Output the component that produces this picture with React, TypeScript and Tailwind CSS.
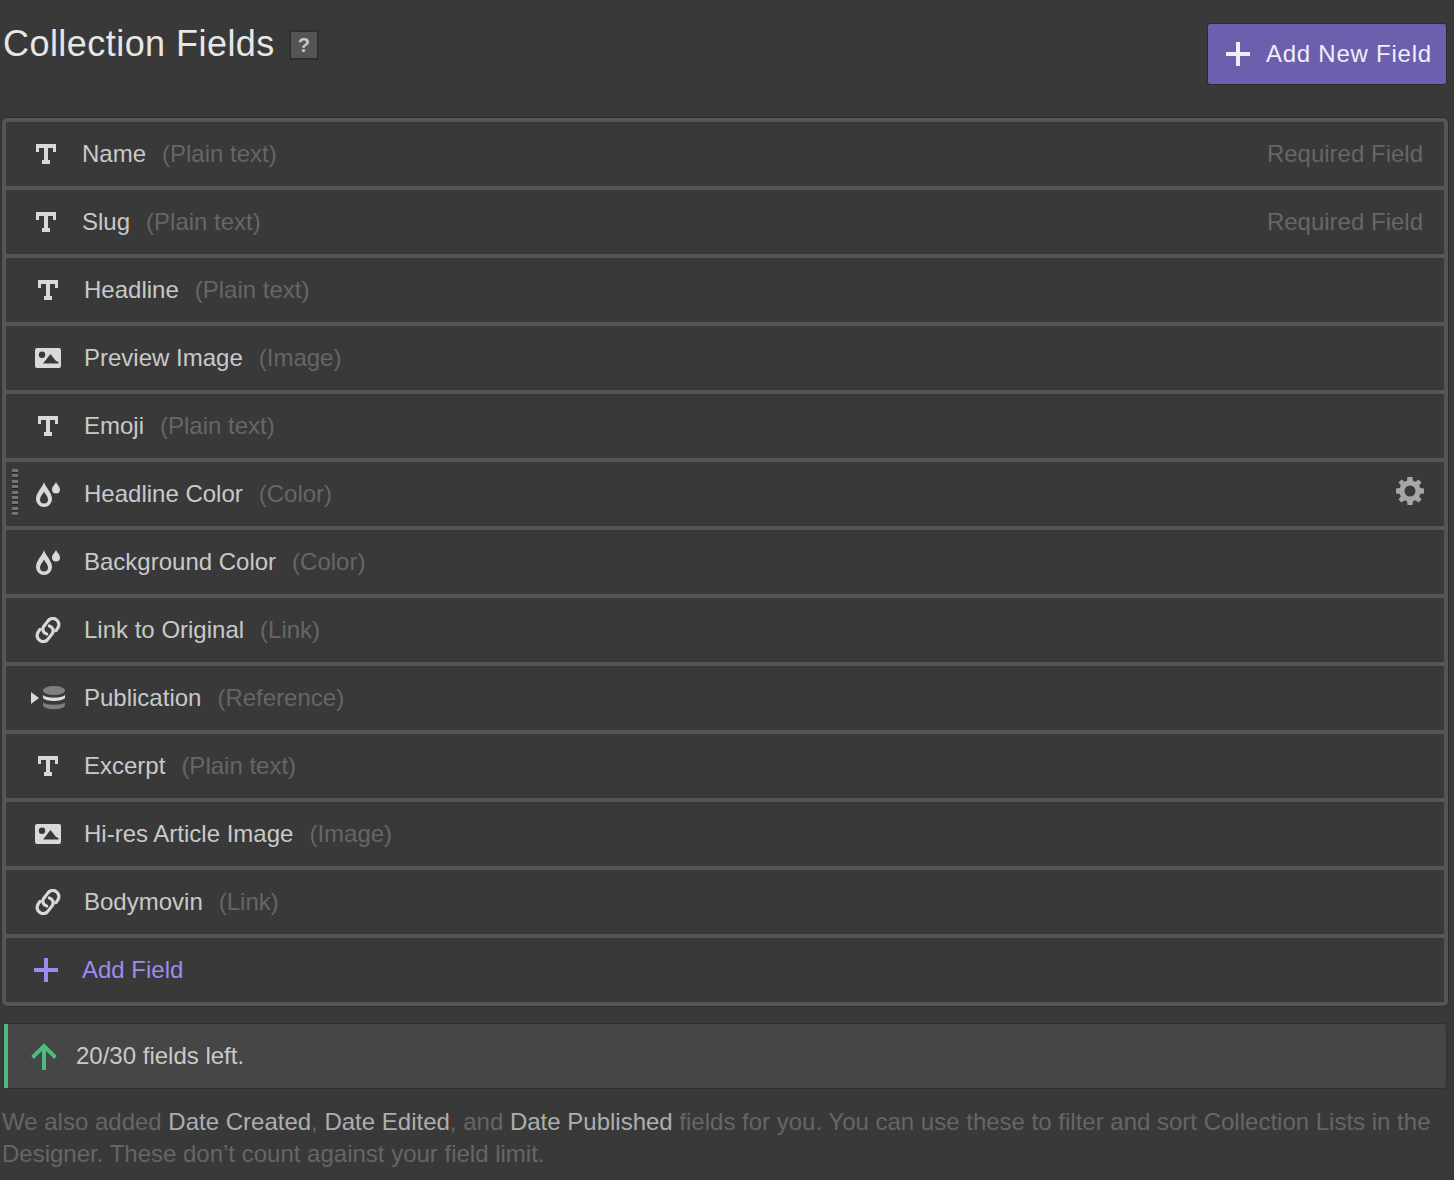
import React from "react";

const TIcon = () => (
  <svg width="20" height="20" viewBox="0 0 20 20" fill="#d9d9d9">
    <path d="M0 0H20V8H17V4H12V16H14V20H6V16H8V4H3V8H0Z" />
  </svg>
);
const ImageIcon = () => (
  <svg width="26" height="20" viewBox="0 0 26 20">
    <path fillRule="evenodd" fill="#d9d9d9" d="M2 0H24A2 2 0 0 1 26 2V18A2 2 0 0 1 24 20H2A2 2 0 0 1 0 18V2A2 2 0 0 1 2 0ZM7 3.6A3.2 3.2 0 1 0 7 10A3.2 3.2 0 1 0 7 3.6ZM15.5 6L8 15.5H23.5V14L21 13L19 10.5Z" />
  </svg>
);
const DropIcon = () => (
  <svg width="24" height="25" viewBox="0 0 24 25">
    <path
      fillRule="evenodd"
      fill="#d9d9d9"
      d="M8 0C7 4.5 0 10.5 0 17A8 8 0 0 0 16 17C16 10.5 9 4.5 8 0ZM8 9.5C9 12 12 14.5 12 17.5A4 4 0 0 1 4 17.5C4 14.5 7 12 8 9.5Z"
    />
    <path d="M20 0C18.8 3 16 4.6 16 7.4A4 4 0 0 0 24 7.4C24 4.6 21.2 3 20 0Z" fill="#d9d9d9" />
  </svg>
);
const LinkIcon = () => (
  <svg width="26" height="26" viewBox="0 0 26 26" fill="none" stroke="#d9d9d9" strokeWidth="3.2" strokeLinecap="round">
    <path d="M11.6 17A5 5 0 0 1 8.6 9.6L12.6 4.4A6 6 0 0 1 23 10.6L21 13.6" />
    <path d="M14.4 9A5 5 0 0 1 17.4 16.4L13.4 21.6A6 6 0 0 1 3 15.4L5 12.4" />
  </svg>
);
const RefIcon = () => (
  <span className="flex items-center">
    <svg width="8" height="12" viewBox="0 0 8 12" fill="#d9d9d9" className="mr-[4px]">
      <path d="M0 0L8 6L0 12Z" />
    </svg>
    <svg width="22" height="24" viewBox="0 0 22 24">
      <ellipse cx="11" cy="4.5" rx="11" ry="4.5" fill="#7f7f7f" />
      <path d="M0 9C3 12.5 19 12.5 22 9V12C19 16 3 16 0 12Z" fill="#dcdcdc" />
      <path d="M0 16.5C3 19.5 19 19.5 22 16.5V19.5C20 24.5 2 24.5 0 19.5Z" fill="#7f7f7f" />
    </svg>
  </span>
);
const PlusIcon = ({ color }: { color: string }) => (
  <svg width="24" height="24" viewBox="0 0 24 24" fill={color}>
    <path d="M10 0H14V10H24V14H14V24H10V14H0V10H10Z" />
  </svg>
);
const GearIcon = () => (
  <svg width="28" height="28" viewBox="0 0 28 28" fill="#a6a6a6">
    <path
      fillRule="evenodd"
      d="M11.5 0H16.5L17 3.8L19.4 4.8L22.5 2.5L25.5 5.5L23.2 8.6L24.2 11L28 11.5V16.5L24.2 17L23.2 19.4L25.5 22.5L22.5 25.5L19.4 23.2L17 24.2L16.5 28H11.5L11 24.2L8.6 23.2L5.5 25.5L2.5 22.5L4.8 19.4L3.8 17L0 16.5V11.5L3.8 11L4.8 8.6L2.5 5.5L5.5 2.5L8.6 4.8L11 3.8ZM14 8.5A5.5 5.5 0 1 0 14 19.5A5.5 5.5 0 1 0 14 8.5Z"
    />
  </svg>
);

type Field = { name: string; type: string; icon: React.ReactNode; required?: boolean; hover?: boolean; shift?: boolean };

const fields: Field[] = [
  { name: "Name", type: "(Plain text)", icon: <TIcon />, required: true, shift: true },
  { name: "Slug", type: "(Plain text)", icon: <TIcon />, required: true, shift: true },
  { name: "Headline", type: "(Plain text)", icon: <TIcon /> },
  { name: "Preview Image", type: "(Image)", icon: <ImageIcon /> },
  { name: "Emoji", type: "(Plain text)", icon: <TIcon /> },
  { name: "Headline Color", type: "(Color)", icon: <DropIcon />, hover: true },
  { name: "Background Color", type: "(Color)", icon: <DropIcon /> },
  { name: "Link to Original", type: "(Link)", icon: <LinkIcon /> },
  { name: "Publication", type: "(Reference)", icon: <RefIcon /> },
  { name: "Excerpt", type: "(Plain text)", icon: <TIcon /> },
  { name: "Hi-res Article Image", type: "(Image)", icon: <ImageIcon /> },
  { name: "Bodymovin", type: "(Link)", icon: <LinkIcon /> },
];

function Row({ f }: { f: Field }) {
  return (
    <div className="relative flex h-[68px] items-center border-b-4 border-[#555555] text-[24px] leading-none">
      {f.hover && (
        <div className="absolute left-[6px] top-[7px] flex h-[47px] w-[6px] flex-col justify-between">
          {Array.from({ length: 9 }).map((_, i) => (
            <span key={i} className="block h-[4px] w-[6px] border-b border-[#242424] bg-[#747474]" />
          ))}
        </div>
      )}
      <div className={`flex items-center justify-center ${f.shift ? "ml-[20px] w-[40px]" : "ml-[22px] w-[40px]"}`}>{f.icon}</div>
      <span className="ml-[16px] text-[#c9c9c9]">{f.name}</span>
      <span className="ml-[16px] text-[#666666]">{f.type}</span>
      {f.required && <span className="ml-auto mr-[21px] text-[#666666]">Required Field</span>}
      {f.hover && (
        <div className="ml-auto mr-[20px] mb-[6px]">
          <GearIcon />
        </div>
      )}
    </div>
  );
}

export default function App() {
  return (
    <div className="h-[1180px] overflow-hidden bg-[#393939] font-['Liberation_Sans',Arial,sans-serif]">
      <div className="flex h-[117px] items-start justify-between pl-[3px] pr-[7px]">
        <div className="mt-[23px] flex items-center">
          <h1 className="text-[36px] font-normal leading-[42px] tracking-[0.45px] text-[#e6e6e6]">Collection Fields</h1>
          <span className="ml-[14px] mt-[2px] flex h-[30px] w-[30px] items-center justify-center rounded-[3px] border-2 border-[#2f2f2f] bg-[#555555] text-[20px] font-bold text-[#c8c8c8]">
            ?
          </span>
        </div>
        <button className="mt-[23px] flex h-[62px] w-[240px] items-center rounded-[3px] border border-[#2b2b2b] bg-[#6b5fae] pl-[18px] text-[24px] tracking-[0.75px] text-[#f0eef8]">
          <PlusIcon color="#f0eef8" />
          <span className="ml-[16px]">Add New Field</span>
        </button>
      </div>

      <div className="ml-[1px] mr-[5px] rounded-[6px] border border-[#2e2e2e]">
        <div className="rounded-[5px] border-4 border-[#555555]">
          {fields.map((f) => (
            <Row key={f.name} f={f} />
          ))}
          <div className="flex h-[64px] items-center text-[24px] leading-none">
            <div className="ml-[20px] flex w-[40px] items-center justify-center">
              <PlusIcon color="#9d8cf0" />
            </div>
            <span className="ml-[16px] text-[#9d8cf0]">Add Field</span>
          </div>
        </div>
      </div>

      <div className="ml-[3px] mr-[7px] mt-[16px] flex h-[66px] items-center rounded-[3px] border border-[#2f2f2f] bg-[#464646]">
        <div className="h-full w-[4px] bg-[#4cbb7f]" />
        <svg width="26" height="27" viewBox="0 0 26 27" fill="none" stroke="#4cbb7f" strokeWidth="4" className="ml-[23px]">
          <path d="M13 27V3M1.5 14.5L13 3L24.5 14.5" />
        </svg>
        <span className="ml-[19px] text-[24px] leading-none text-[#c9c9c9]">20/30 fields left.</span>
      </div>

      <p className="ml-[2px] mr-[10px] mt-[17px] text-[24px] leading-[32px] text-[#666666]">
        We also added <span className="text-[#aeaeae]">Date Created</span>, <span className="text-[#aeaeae]">Date Edited</span>, and{" "}
        <span className="text-[#aeaeae]">Date Published</span> fields for you. You can use these to filter and sort Collection Lists in the
        Designer. These don’t count against your field limit.
      </p>
    </div>
  );
}
